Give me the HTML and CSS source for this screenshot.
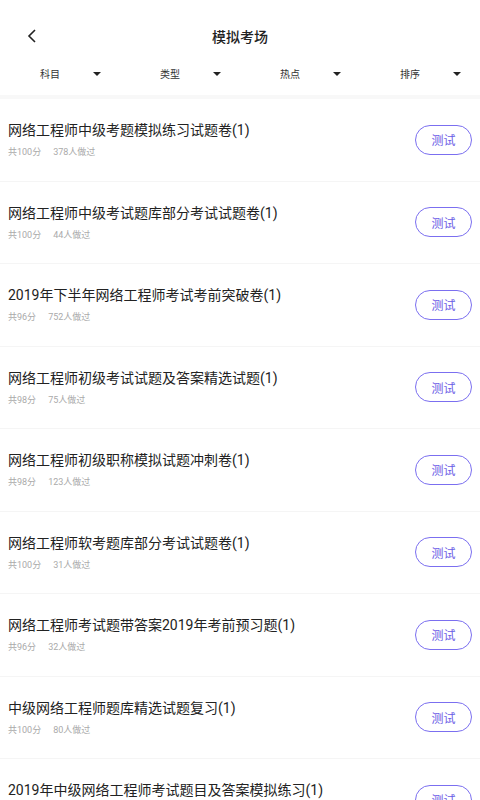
FILE: index.html
```html
<!DOCTYPE html>
<html lang="zh-CN">
<head>
    <meta charset="UTF-8">
    <meta name="viewport" content="width=device-width, initial-scale=1.0">
    <title>模拟考场</title>
    <link rel="stylesheet" href="styles.css">
</head>
<body>

    <div class="header">
        <span class="back">
            <svg width="10" height="14" viewBox="0 0 10 14"><path d="M8 1 L2 7 L8 13" fill="none" stroke="#222" stroke-width="1.6"/></svg>
        </span>
        <h1>模拟考场</h1>
    </div>

    <div class="filters">
        <div class="filter"><span>科目</span><i class="caret"></i></div>
        <div class="filter"><span>类型</span><i class="caret"></i></div>
        <div class="filter"><span>热点</span><i class="caret"></i></div>
        <div class="filter"><span>排序</span><i class="caret"></i></div>
    </div>

    <div class="list">
        <div class="item">
            <div class="info">
                <div class="title">网络工程师中级考题模拟练习试题卷(1)</div>
                <div class="meta"><span>共100分</span><span>378人做过</span></div>
            </div>
            <button>测试</button>
        </div>
        <div class="item">
            <div class="info">
                <div class="title">网络工程师中级考试题库部分考试试题卷(1)</div>
                <div class="meta"><span>共100分</span><span>44人做过</span></div>
            </div>
            <button>测试</button>
        </div>
        <div class="item">
            <div class="info">
                <div class="title">2019年下半年网络工程师考试考前突破卷(1)</div>
                <div class="meta"><span>共96分</span><span>752人做过</span></div>
            </div>
            <button>测试</button>
        </div>
        <div class="item">
            <div class="info">
                <div class="title">网络工程师初级考试试题及答案精选试题(1)</div>
                <div class="meta"><span>共98分</span><span>75人做过</span></div>
            </div>
            <button>测试</button>
        </div>
        <div class="item">
            <div class="info">
                <div class="title">网络工程师初级职称模拟试题冲刺卷(1)</div>
                <div class="meta"><span>共98分</span><span>123人做过</span></div>
            </div>
            <button>测试</button>
        </div>
        <div class="item">
            <div class="info">
                <div class="title">网络工程师软考题库部分考试试题卷(1)</div>
                <div class="meta"><span>共100分</span><span>31人做过</span></div>
            </div>
            <button>测试</button>
        </div>
        <div class="item">
            <div class="info">
                <div class="title">网络工程师考试题带答案2019年考前预习题(1)</div>
                <div class="meta"><span>共96分</span><span>32人做过</span></div>
            </div>
            <button>测试</button>
        </div>
        <div class="item">
            <div class="info">
                <div class="title">中级网络工程师题库精选试题复习(1)</div>
                <div class="meta"><span>共100分</span><span>80人做过</span></div>
            </div>
            <button>测试</button>
        </div>
        <div class="item">
            <div class="info">
                <div class="title">2019年中级网络工程师考试题目及答案模拟练习(1)</div>
                <div class="meta"><span>共100分</span><span>56人做过</span></div>
            </div>
            <button>测试</button>
        </div>
    </div>

</body>
</html>
```

FILE: styles.css
```css
body {
    font-family: Roboto, "Noto Sans CJK SC", sans-serif;
    background-color: #fff;
    margin: 0;
    padding: 0;
    overflow: hidden;
}

.header {
    height: 58px;
    padding-top: 14px;
    box-sizing: border-box;
    display: flex;
    align-items: center;
    justify-content: center;
    position: relative;
}

.back {
    position: absolute;
    left: 27px;
    top: 29px;
    line-height: 0;
}

h1 {
    margin: 0;
    font-size: 14px;
    font-weight: 500;
    color: #222;
}

.filters {
    display: flex;
    height: 37px;
    padding-bottom: 6px;
    box-sizing: border-box;
    align-items: center;
}

.filter {
    flex: 1;
    display: flex;
    align-items: center;
    padding-left: 40px;
    font-size: 10px;
    color: #333;
}

.caret {
    margin-left: 33px;
    width: 0;
    height: 0;
    border-left: 4px solid transparent;
    border-right: 4px solid transparent;
    border-top: 4px solid #222;
}

.list {
    border-top: 4px solid #f8f8f8;
}

.item {
    height: 81.5px;
    border-bottom: 1px solid #f5f5f5;
    display: flex;
    align-items: center;
    padding: 0 8px;
}

.info {
    flex: 1;
    align-self: flex-start;
    padding-top: 21px;
}

.title {
    font-size: 14px;
    color: #222;
    line-height: 20px;
}

.meta {
    margin-top: 6px;
    font-size: 9px;
    color: #aaa;
    line-height: 12px;
}

.meta span {
    margin-right: 12px;
}

button {
    width: 57px;
    height: 30px;
    border: 1px solid #7b6ff0;
    border-radius: 15px;
    background: #fff;
    color: #6a5ce6;
    font-family: Roboto, "Noto Sans CJK SC", sans-serif;
    font-size: 12px;
    padding: 0;
}
```
